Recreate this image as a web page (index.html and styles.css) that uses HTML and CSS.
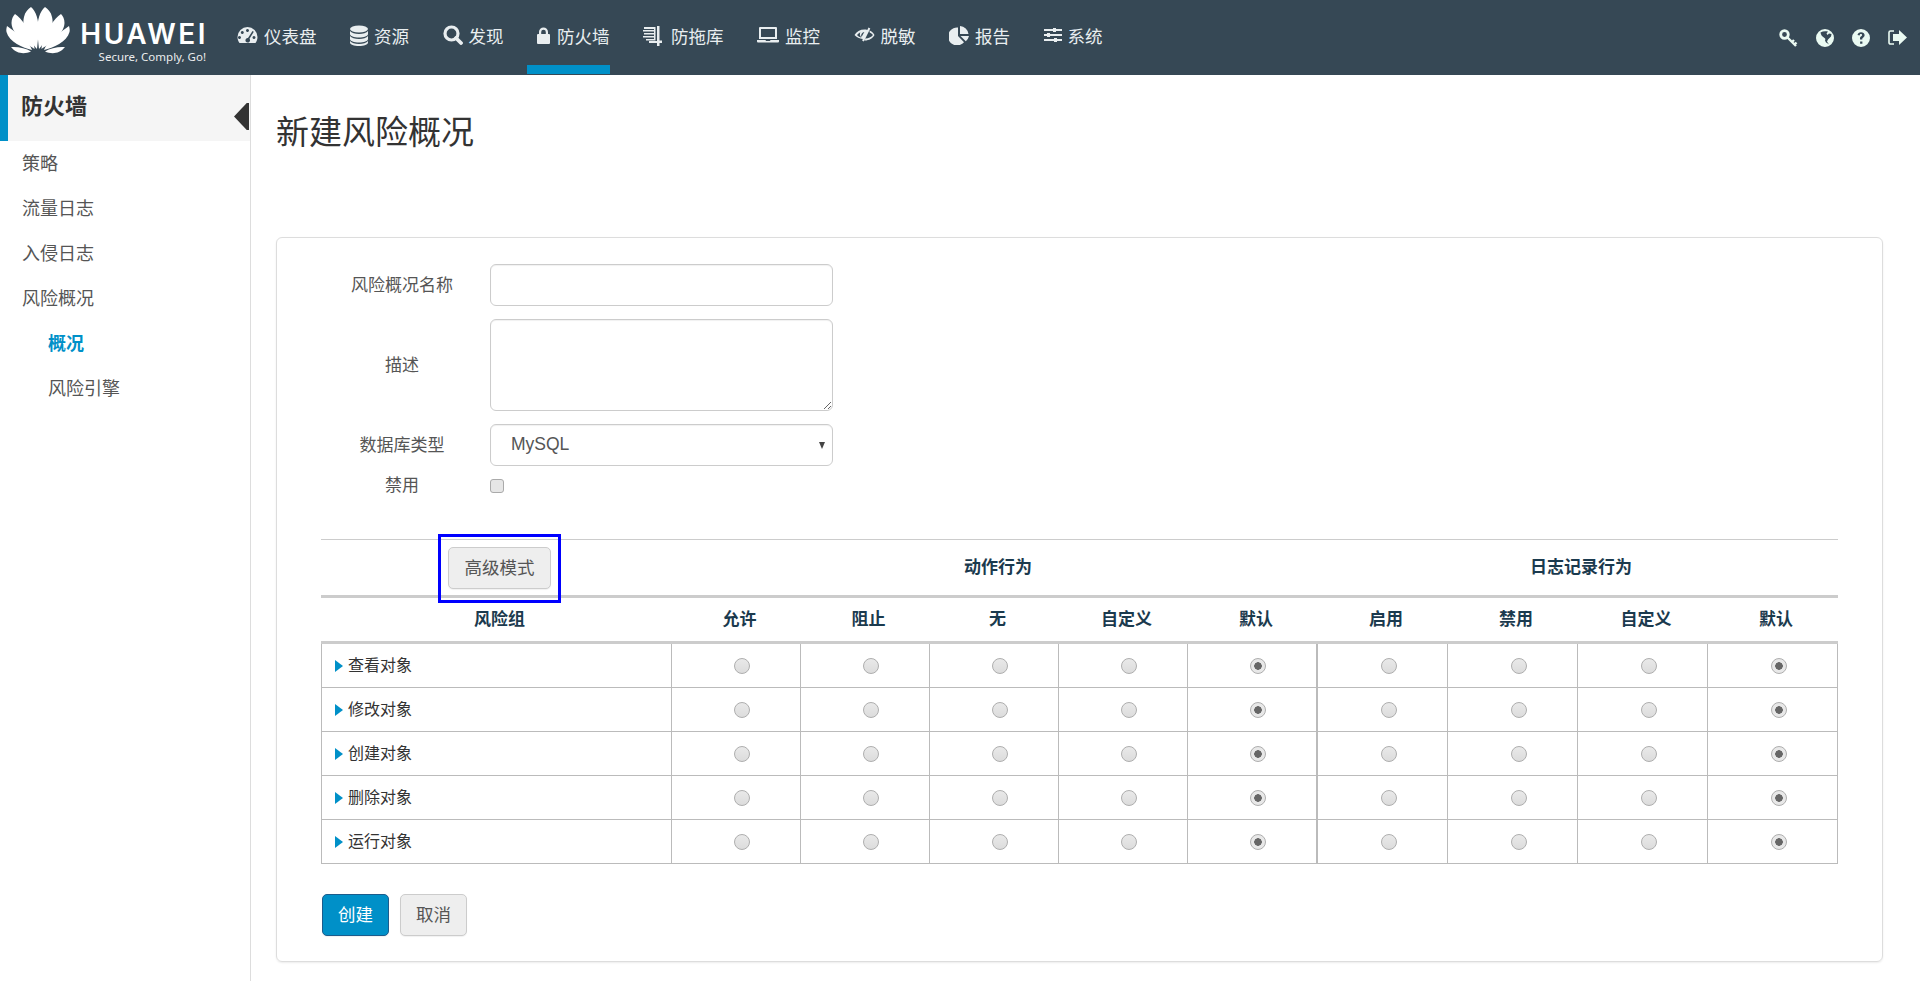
FILE: index.html
```html
<!DOCTYPE html>
<html lang="zh-CN">
<head>
  <meta charset="UTF-8">
  <meta name="viewport" content="width=device-width, initial-scale=1.0">
  <title>新建风险概况</title>
  <link rel="stylesheet" href="styles.css">
</head>
<body>
  <header class="topbar">
    <a class="brand">
      <svg class="brand-mark" viewBox="0 0 64 47">
        <defs>
          <g id="petals">
            <path d="M31 42C24 34 15 22 18 10C19 5 22 2 25 0C30 4 33 13 32.5 24C32.3 31 31.5 37 31 42Z"/>
            <path d="M28.5 42C20 36 6 28 5.5 16C5.5 12 7 9 9 7C16 12 23 22 26 31C27.5 35 28.5 39 28.5 42Z"/>
            <path d="M26 43C17 41 3 35 .5 25C0 23 .5 21 1 19C8 24 17 31 22 36C24 38 25 41 26 43Z"/>
            <path d="M25 44.5C19 47 11 47.5 5 40C12 39.5 20 41 25 44.5Z"/>
          </g>
        </defs>
        <use href="#petals"/>
        <use href="#petals" transform="translate(64 0) scale(-1 1)"/>
      </svg>
      <span class="brand-text">
        <span class="brand-name">HUAWEI</span>
        <span class="brand-tag">Secure, Comply, Go!</span>
      </span>
    </a>
    <nav class="nav">
      <a class="nav-item">
        <svg width="21" height="18" viewBox="0 0 21 18"><path fill-rule="evenodd" d="M10.5 1A10 10 0 0 0 .5 11c0 2.4.8 4.5 2 6h16c1.2-1.500 2-3.600 2-6a10 10 0 0 0-10-10ZM4 11.500a1.500 1.500 0 1 1 0-.1ZM6.800 6.500a1.500 1.500 0 1 1 0-.1ZM12 4.500a1.500 1.500 0 1 1 0-.1ZM18.500 11.500a1.500 1.500 0 1 1 0-.1ZM15.500 5l1.300.8-4.300 7a2.300 2.300 0 1 1-1.500-.8Z"/></svg>
        <span>仪表盘</span>
      </a>
      <a class="nav-item">
        <svg width="18" height="21" viewBox="0 0 18 21"><ellipse cx="9" cy="4" rx="9" ry="3.5"/><path d="M0 6v3c0 2 4 3.5 9 3.5s9-1.500 9-3.500V6c-1.500 2-5 3-9 3S1.500 8 0 6ZM0 11v3c0 2 4 3.500 9 3.500s9-1.500 9-3.500v-3c-1.500 2-5 3-9 3s-7.500-1-9-3ZM0 16v1.500C0 19.500 4 21 9 21s9-1.500 9-3.500V16c-1.500 2-5 3-9 3s-7.500-1-9-3Z"/></svg>
        <span>资源</span>
      </a>
      <a class="nav-item">
        <svg width="20" height="20" viewBox="0 0 20 20"><circle cx="8.5" cy="8.5" r="6.5" fill="none" stroke="currentColor" stroke-width="3.2"/><path d="M13 13l5 5" stroke="currentColor" stroke-width="3.8" stroke-linecap="round"/></svg>
        <span>发现</span>
      </a>
      <a class="nav-item is-active">
        <svg width="13" height="17" viewBox="0 0 13 17"><path d="M2 7V5a4.500 4.500 0 0 1 9 0v2h1a1 1 0 0 1 1 1v8a1 1 0 0 1-1 1H1a1 1 0 0 1-1-1V8a1 1 0 0 1 1-1Zm2.200 0h4.600V5a2.300 2.300 0 0 0-4.600 0Z"/></svg>
        <span>防火墙</span>
      </a>
      <a class="nav-item nav-item-loose">
        <svg width="19" height="21" viewBox="0 0 19 21"><path d="M1 2h10v2H1ZM0 5h11v1.500H0ZM1 8h10v1.500H1ZM0 11h11v1.500H0ZM3 14h8v1.500H3ZM14 1h2.500v14.500H19V18h-2.500v3H14v-3H6v-2h8Z"/><path d="M11 2h1.500v13.500H11Z"/></svg>
        <span>防拖库</span>
      </a>
      <a class="nav-item">
        <svg width="22" height="16" viewBox="0 0 22 16"><path fill-rule="evenodd" d="M3 0h16a1 1 0 0 1 1 1v11H2V1a1 1 0 0 1 1-1Zm1 2v8h14V2ZM0 13h8.500l.5 1h4l.5-1H22v1.500a1 1 0 0 1-1 1H1a1 1 0 0 1-1-1Z"/></svg>
        <span>监控</span>
      </a>
      <a class="nav-item">
        <svg width="21" height="16" viewBox="0 0 21 16"><path fill-rule="evenodd" d="M.5 8C2.500 4.500 6 2.500 10.500 2.500c1 0 2 .1 2.800.4L14.500.5l1.800 1-6.500 13-1.700-1 .7-1.500C5.500 11.500 2.500 10.500.5 8Zm9.500-3a3.500 3.500 0 0 0-2.500 5l2.800-5ZM3 8c1.200 1.300 2.800 2.200 4.500 2.700C5.800 9 5.500 7 6.300 5.300 5 6 4 6.900 3 8ZM15.500 3.500c2.200.9 3.900 2.500 5 4.500-1.800 3.300-5.500 5.500-9.500 5.500h-.5l1-2c3 0 5.700-1.300 7.500-3.500-1-1.100-2-2-3.300-2.600Z"/></svg>
        <span>脱敏</span>
      </a>
      <a class="nav-item">
        <svg width="20" height="19" viewBox="0 0 20 19"><path d="M9 1.500V10l6 6.200A9 9 0 1 1 9 1.500Z"/><path d="M11 0a9 9 0 0 1 8.500 8H11ZM11.500 10H20a9 9 0 0 1-3.200 5.200Z"/></svg>
        <span>报告</span>
      </a>
      <a class="nav-item">
        <svg width="18" height="16" viewBox="0 0 18 16"><path d="M0 2h9V1h3v1h6v2h-6v1H9V4H0ZM0 7h3V6h3v1h12v2H6v1H3V9H0ZM0 12h10v-1h3v1h5v2h-5v1h-3v-1H0Z"/></svg>
        <span>系统</span>
      </a>
    </nav>
    <div class="tools">
      <svg width="19" height="18" viewBox="0 0 19 18"><circle cx="5.5" cy="5.5" r="3.8" fill="none" stroke="currentColor" stroke-width="2.8"/><path d="M8 8l9 9M13 13l2-2M15.5 15.5l2-2" fill="none" stroke="currentColor" stroke-width="2.4"/></svg>
      <svg width="18" height="18" viewBox="0 0 18 18"><path fill-rule="evenodd" d="M9 0a9 9 0 1 1 0 18A9 9 0 0 1 9 0ZM4.500 3.500C5 6 6 7.500 8.500 9c1 .6 1 1.500.5 2.500l1 2 1 .5 2 1.500-2-3 1-2 3-3 .5-2.500L13 4.500 11.500 6l-1-1.500L12 2.500C9 2 6.500 2.300 4.500 3.500Z"/></svg>
      <svg width="18" height="18" viewBox="0 0 18 18"><path fill-rule="evenodd" d="M9 0a9 9 0 1 1 0 18A9 9 0 0 1 9 0Zm-.9 12.500v2.300h2.300v-2.300ZM9 3.200c-1.900 0-3.200 1-3.500 2.900l2.100.4c.2-1 .6-1.400 1.300-1.400.7 0 1.200.4 1.200 1 0 .5-.3.800-.9 1.200-1 .7-1.200 1.300-1.200 2.200v.9h2.300v-.6c0-.5.200-.7.800-1.100 1-.7 1.500-1.500 1.500-2.600 0-1.800-1.500-2.900-3.600-2.900Z"/></svg>
      <svg width="19" height="15" viewBox="0 0 19 15"><path d="M11 0l8 7.500-8 7.500v-4H5V4h6Z"/><path d="M6 1H2.500A1.500 1.500 0 0 0 1 2.500v10A1.500 1.500 0 0 0 2.500 14H6" fill="none" stroke="currentColor" stroke-width="1.6"/></svg>
    </div>
  </header>

  <div class="layout">
    <aside class="sidebar">
      <h2 class="side-title">防火墙</h2>
      <span class="side-toggle"></span>
      <ul class="side-menu">
        <li>策略</li>
        <li>流量日志</li>
        <li>入侵日志</li>
        <li>风险概况</li>
        <li class="sub is-current">概况</li>
        <li class="sub">风险引擎</li>
      </ul>
    </aside>

    <main class="content">
      <h1 class="page-title">新建风险概况</h1>
      <section class="card">
        <form class="form-grid">
          <label>风险概况名称</label>
          <input class="field" type="text">
          <label>描述</label>
          <textarea class="field field-area"></textarea>
          <label>数据库类型</label>
          <div class="select-wrap">
            <select class="field">
              <option>MySQL</option>
            </select>
          </div>
          <label class="label-short">禁用</label>
          <input class="check" type="checkbox">
        </form>

        <table class="risk-table">
          <colgroup>
            <col class="col-name">
            <col class="col-a"><col class="col-a"><col class="col-a"><col class="col-a"><col class="col-b">
            <col class="col-b"><col class="col-b"><col class="col-b"><col class="col-b">
          </colgroup>
          <thead>
            <tr class="head-top">
              <th><span class="marked"><button class="btn" type="button">高级模式</button></span></th>
              <th colspan="5">动作行为</th>
              <th colspan="4">日志记录行为</th>
            </tr>
            <tr class="head-sub">
              <th>风险组</th>
              <th>允许</th><th>阻止</th><th>无</th><th>自定义</th><th>默认</th>
              <th>启用</th><th>禁用</th><th>自定义</th><th>默认</th>
            </tr>
          </thead>
          <tbody>
            <tr>
              <td class="group">查看对象</td>
              <td><input type="radio" name="a1"></td><td><input type="radio" name="a1"></td><td><input type="radio" name="a1"></td><td><input type="radio" name="a1"></td><td class="split"><input type="radio" name="a1" checked></td>
              <td><input type="radio" name="l1"></td><td><input type="radio" name="l1"></td><td><input type="radio" name="l1"></td><td><input type="radio" name="l1" checked></td>
            </tr>
            <tr>
              <td class="group">修改对象</td>
              <td><input type="radio" name="a2"></td><td><input type="radio" name="a2"></td><td><input type="radio" name="a2"></td><td><input type="radio" name="a2"></td><td class="split"><input type="radio" name="a2" checked></td>
              <td><input type="radio" name="l2"></td><td><input type="radio" name="l2"></td><td><input type="radio" name="l2"></td><td><input type="radio" name="l2" checked></td>
            </tr>
            <tr>
              <td class="group">创建对象</td>
              <td><input type="radio" name="a3"></td><td><input type="radio" name="a3"></td><td><input type="radio" name="a3"></td><td><input type="radio" name="a3"></td><td class="split"><input type="radio" name="a3" checked></td>
              <td><input type="radio" name="l3"></td><td><input type="radio" name="l3"></td><td><input type="radio" name="l3"></td><td><input type="radio" name="l3" checked></td>
            </tr>
            <tr>
              <td class="group">删除对象</td>
              <td><input type="radio" name="a4"></td><td><input type="radio" name="a4"></td><td><input type="radio" name="a4"></td><td><input type="radio" name="a4"></td><td class="split"><input type="radio" name="a4" checked></td>
              <td><input type="radio" name="l4"></td><td><input type="radio" name="l4"></td><td><input type="radio" name="l4"></td><td><input type="radio" name="l4" checked></td>
            </tr>
            <tr>
              <td class="group">运行对象</td>
              <td><input type="radio" name="a5"></td><td><input type="radio" name="a5"></td><td><input type="radio" name="a5"></td><td><input type="radio" name="a5"></td><td class="split"><input type="radio" name="a5" checked></td>
              <td><input type="radio" name="l5"></td><td><input type="radio" name="l5"></td><td><input type="radio" name="l5"></td><td><input type="radio" name="l5" checked></td>
            </tr>
          </tbody>
        </table>

        <div class="actions">
          <button class="btn btn-primary" type="button">创建</button>
          <button class="btn" type="button">取消</button>
        </div>
      </section>
    </main>
  </div>
</body>
</html>
```

FILE: styles.css
```css
* {
  box-sizing: border-box;
}
html,
body {
  height: 100%;
}
body {
  margin: 0;
  overflow: hidden;
  font-family: "Liberation Sans", "Noto Sans CJK SC", sans-serif;
  font-size: 17px;
  color: #555;
  background: #fff;
}

/* top bar */
.topbar {
  display: flex;
  align-items: flex-start;
  height: 75px;
  background: #364855;
  color: #e9eef0;
}
.brand {
  display: flex;
  width: 237px;
  flex-shrink: 0;
  padding: 7px 0 0 6px;
  color: #fff;
}
.brand-mark {
  width: 64px;
  height: 47px;
  fill: #fff;
}
.brand-text {
  display: flex;
  flex-direction: column;
  align-items: flex-end;
  width: 126px;
  margin-left: 10px;
}
.brand-name {
  margin-top: 13px;
  margin-right: -2px;
  font-family: Inter, sans-serif;
  font-size: 28px;
  font-weight: 600;
  line-height: 28px;
  letter-spacing: 2.5px;
}
.brand-tag {
  margin-top: 1px;
  font-family: "Noto Sans", sans-serif;
  font-size: 11.5px;
  line-height: 16px;
  opacity: .9;
}
.nav {
  display: flex;
  gap: 33.5px;
  height: 75px;
}
.nav-item {
  position: relative;
  display: flex;
  align-items: center;
  gap: 6px;
  height: 70px;
  font-size: 17.5px;
  color: #e9eef0;
}
.nav-item-loose {
  gap: 9px;
}
.is-active {
  gap: 7px;
}
.nav-item svg {
  fill: currentColor;
  flex-shrink: 0;
}
.is-active::after {
  content: "";
  position: absolute;
  left: -10px;
  right: 0;
  top: 65px;
  height: 9px;
  background: #0090c8;
}
.tools {
  display: flex;
  align-items: center;
  gap: 18px;
  height: 75px;
  margin-left: auto;
  padding-right: 13px;
  color: #eafaf2;
}
.tools svg {
  fill: currentColor;
}

/* side menu */
.layout {
  display: flex;
  height: calc(100% - 75px);
}
.sidebar {
  position: relative;
  flex: 0 0 251px;
  border-right: 1px solid #ddd;
}
.side-title {
  height: 66px;
  margin: 0;
  padding-left: 13px;
  border-left: 8px solid #0090c8;
  background: #f5f5f5;
  font-size: 22px;
  line-height: 64px;
  color: #333;
}
.side-toggle {
  position: absolute;
  top: 28px;
  left: 234px;
  width: 15px;
  height: 27px;
  background: #333;
  clip-path: polygon(100% 0, 100% 100%, 85% 100%, 0 50%, 85% 0);
}
.side-menu {
  margin: 0;
  padding: 1px 0 0;
  list-style: none;
}
.side-menu li {
  height: 45px;
  padding-left: 22px;
  font-size: 18px;
  line-height: 45px;
  color: #555;
}
.side-menu .sub {
  padding-left: 48px;
}
.side-menu .is-current {
  font-weight: bold;
  color: #0090c8;
}

/* main area */
.content {
  flex: 1;
  padding: 37px 37px 0 25px;
}
.page-title {
  height: 40px;
  margin: 0 0 85px;
  padding-top: 1px;
  font-size: 33px;
  font-weight: normal;
  line-height: 40px;
  color: #333;
}
.card {
  height: 725px;
  padding: 26px 43px 0 45px;
  border: 1px solid #ddd;
  border-radius: 6px;
  box-shadow: 0 1px 2px rgba(0, 0, 0, .08);
}
.form-grid {
  display: grid;
  grid-template-columns: 160px 343px;
  column-gap: 8px;
  row-gap: 13px;
  align-items: center;
}
.form-grid label {
  padding-bottom: 4px;
  text-align: center;
}
.form-grid .label-short {
  padding-bottom: 0;
  line-height: 14px;
}
.field {
  display: block;
  width: 100%;
  height: 42px;
  padding: 0 20px 3px;
  border: 1px solid #ccc;
  border-radius: 6px;
  background: #fff;
  font: inherit;
  font-size: 17.5px;
  color: #555;
  box-shadow: inset 0 1px 1px rgba(0, 0, 0, .06);
  appearance: none;
}
.field-area {
  height: 92px;
  padding: 8px 20px;
}
.select-wrap {
  position: relative;
}
.select-wrap::after {
  content: "";
  position: absolute;
  top: 18px;
  right: 8px;
  border-top: 7px solid #444;
  border-left: 3.5px solid transparent;
  border-right: 3.5px solid transparent;
}
.check {
  width: 14px;
  height: 14px;
  margin: 0;
  border: 1px solid #aaa;
  border-radius: 3px;
  background: #e6e6e6;
  appearance: none;
}

/* risk table */
.risk-table {
  width: 1517px;
  margin-top: 46px;
  margin-left: -1px;
  table-layout: fixed;
  border-collapse: separate;
  border-spacing: 0;
}
.col-name { width: 351px; }
.col-a { width: 129px; }
.col-b { width: 130px; }
.risk-table th {
  padding: 0 0 0 6px;
  font-size: 17px;
  font-weight: bold;
  color: #1b3a4e;
  text-align: center;
}
.head-top th {
  height: 59px;
  border-top: 1px solid #ccc;
  border-bottom: 3px solid #ccc;
}
.head-top th + th {
  padding-bottom: 4px;
}
.head-sub th {
  height: 46px;
  padding-bottom: 5px;
  border-bottom: 3px solid #ccc;
}
.risk-table td {
  height: 44px;
  padding: 0 0 0 12px;
  border-right: 1px solid #bbb;
  border-bottom: 1px solid #bbb;
  text-align: center;
}
.risk-table .group {
  position: relative;
  padding: 0 0 4px 26px;
  border-left: 1px solid #bbb;
  font-size: 16px;
  color: #333;
  text-align: left;
}
.group::before {
  content: "";
  position: absolute;
  left: 13px;
  top: 16px;
  border-left: 8px solid #0090c8;
  border-top: 6.5px solid transparent;
  border-bottom: 6.5px solid transparent;
}
.risk-table .split {
  border-right-width: 2px;
}
.risk-table input[type="radio"] {
  display: block;
  width: 16px;
  height: 16px;
  margin: 1px auto 0;
  border: 1px solid #aeaeae;
  border-radius: 50%;
  background: linear-gradient(#e9e9e9, #dcdcdc);
  appearance: none;
}
.risk-table input[type="radio"]:checked {
  background: radial-gradient(circle, #666 0, #666 3.5px, #e8e8e8 4px);
}

/* buttons */
.btn {
  width: 103px;
  height: 42px;
  padding: 0 0 3px;
  border: 1px solid #ccc;
  border-radius: 5px;
  background: #eee;
  font: inherit;
  font-size: 17.5px;
  color: #555;
  box-shadow: 0 1px 1px rgba(0, 0, 0, .06);
}
.marked {
  position: relative;
  display: inline-block;
  vertical-align: middle;
  font-weight: normal;
}
.marked::after {
  content: "";
  position: absolute;
  inset: -13px -10px -14px -10px;
  border: 3px solid #00f;
}
.actions {
  display: flex;
  gap: 11px;
  margin-top: 30px;
}
.actions .btn {
  width: 67px;
}
.btn-primary {
  border-color: #1c5c8c;
  background: #0090c8;
  color: #fff;
}
```
